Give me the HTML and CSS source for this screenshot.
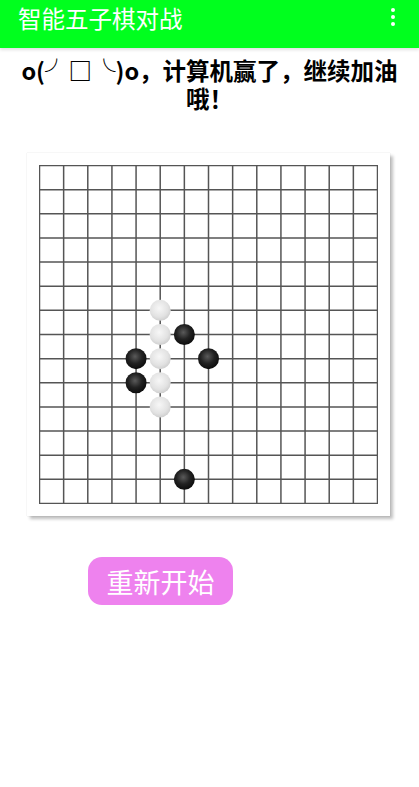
FILE: index.html
```html
<!DOCTYPE html>
<html lang="zh">
<head>
  <meta charset="UTF-8" />
  <meta name="viewport" content="width=device-width, initial-scale=1.0" />
  <title>智能五子棋对战</title>
  <link rel="stylesheet" href="styles.css">
</head>
<body>
  <div class="app-bar">
    <span class="app-title">智能五子棋对战</span>
    <span class="menu-dots"><i></i><i></i><i></i></span>
  </div>

  <p class="message">o(╯□╰)o，计算机赢了，继续加油哦！</p>

  <div class="board">
    <svg id="grid" width="339" height="339" viewBox="0 0 339 339">
      <defs>
        <radialGradient id="whiteStone" cx="45%" cy="40%" r="60%">
          <stop offset="0%" stop-color="#f7f7f7" />
          <stop offset="70%" stop-color="#e2e2e2" />
          <stop offset="100%" stop-color="#cfcfcf" />
        </radialGradient>
        <radialGradient id="blackStone" cx="45%" cy="40%" r="60%">
          <stop offset="0%" stop-color="#5a5a5a" />
          <stop offset="55%" stop-color="#222" />
          <stop offset="100%" stop-color="#0c0c0c" />
        </radialGradient>
      </defs>
      <g id="lines" stroke="#555" stroke-width="1.5"></g>
      <g id="stones"></g>
    </svg>
  </div>

  <button class="restart-btn">重新开始</button>

  <script>
    const SIZE = 15;
    const STEP = 338 / 14;
    const NS = 'http://www.w3.org/2000/svg';

    // [col, row, color]
    const moves = [
      [5, 6, 'w'], [5, 7, 'w'], [5, 8, 'w'], [5, 9, 'w'], [5, 10, 'w'],
      [6, 7, 'b'], [4, 8, 'b'], [7, 8, 'b'], [4, 9, 'b'], [6, 13, 'b']
    ];

    function drawGrid() {
      const g = document.getElementById('lines');
      for (let i = 0; i < SIZE; i++) {
        const p = 0.5 + i * STEP;
        const v = document.createElementNS(NS, 'line');
        v.setAttribute('x1', p); v.setAttribute('x2', p);
        v.setAttribute('y1', 0); v.setAttribute('y2', 339);
        g.appendChild(v);
        const h = document.createElementNS(NS, 'line');
        h.setAttribute('y1', p); h.setAttribute('y2', p);
        h.setAttribute('x1', 0); h.setAttribute('x2', 339);
        g.appendChild(h);
      }
    }

    function drawStones() {
      const g = document.getElementById('stones');
      moves.forEach(([c, r, color]) => {
        const s = document.createElementNS(NS, 'circle');
        s.setAttribute('cx', 0.5 + c * STEP);
        s.setAttribute('cy', 0.5 + r * STEP);
        s.setAttribute('r', 10.5);
        s.setAttribute('fill', color === 'w' ? 'url(#whiteStone)' : 'url(#blackStone)');
        g.appendChild(s);
      });
    }

    drawGrid();
    drawStones();
  </script>
</body>
</html>
```

FILE: styles.css
```css
* {
  box-sizing: border-box;
}
body {
  margin: 0;
  background: #fff;
  font-family: "Noto Sans CJK SC", "Noto Sans", sans-serif;
  color: #000;
}
.app-bar {
  height: 48px;
  background: #00ff1e;
  display: flex;
  align-items: center;
  justify-content: space-between;
  padding: 0 24px 0 18px;
  box-shadow: 0 2px 3px rgba(0, 0, 0, 0.12);
}
.app-title {
  color: #fff;
  font-size: 23.5px;
  line-height: 1;
  margin-top: -10px;
}
.menu-dots {
  display: flex;
  flex-direction: column;
  gap: 3px;
  margin-top: -14px;
}
.menu-dots i {
  display: block;
  width: 4px;
  height: 4px;
  border-radius: 50%;
  background: #fff;
}
.message {
  margin: 0;
  padding: 8px 4px 0;
  font-size: 23.5px;
  font-weight: bold;
  line-height: 28px;
  text-align: center;
}
.board {
  width: 363px;
  margin: 41px 0 0 27px;
  padding: 12px;
  background: #fff;
  box-shadow: 0 0 1px rgba(0, 0, 0, 0.2), 3px 3px 3px rgba(0, 0, 0, 0.25);
}
.board svg {
  display: block;
}
.restart-btn {
  display: block;
  margin: 41px 0 0 88px;
  width: 145px;
  height: 48px;
  border: none;
  border-radius: 14px;
  background: #ee82ee;
  color: #fff;
  font-family: inherit;
  font-size: 27px;
}
```
